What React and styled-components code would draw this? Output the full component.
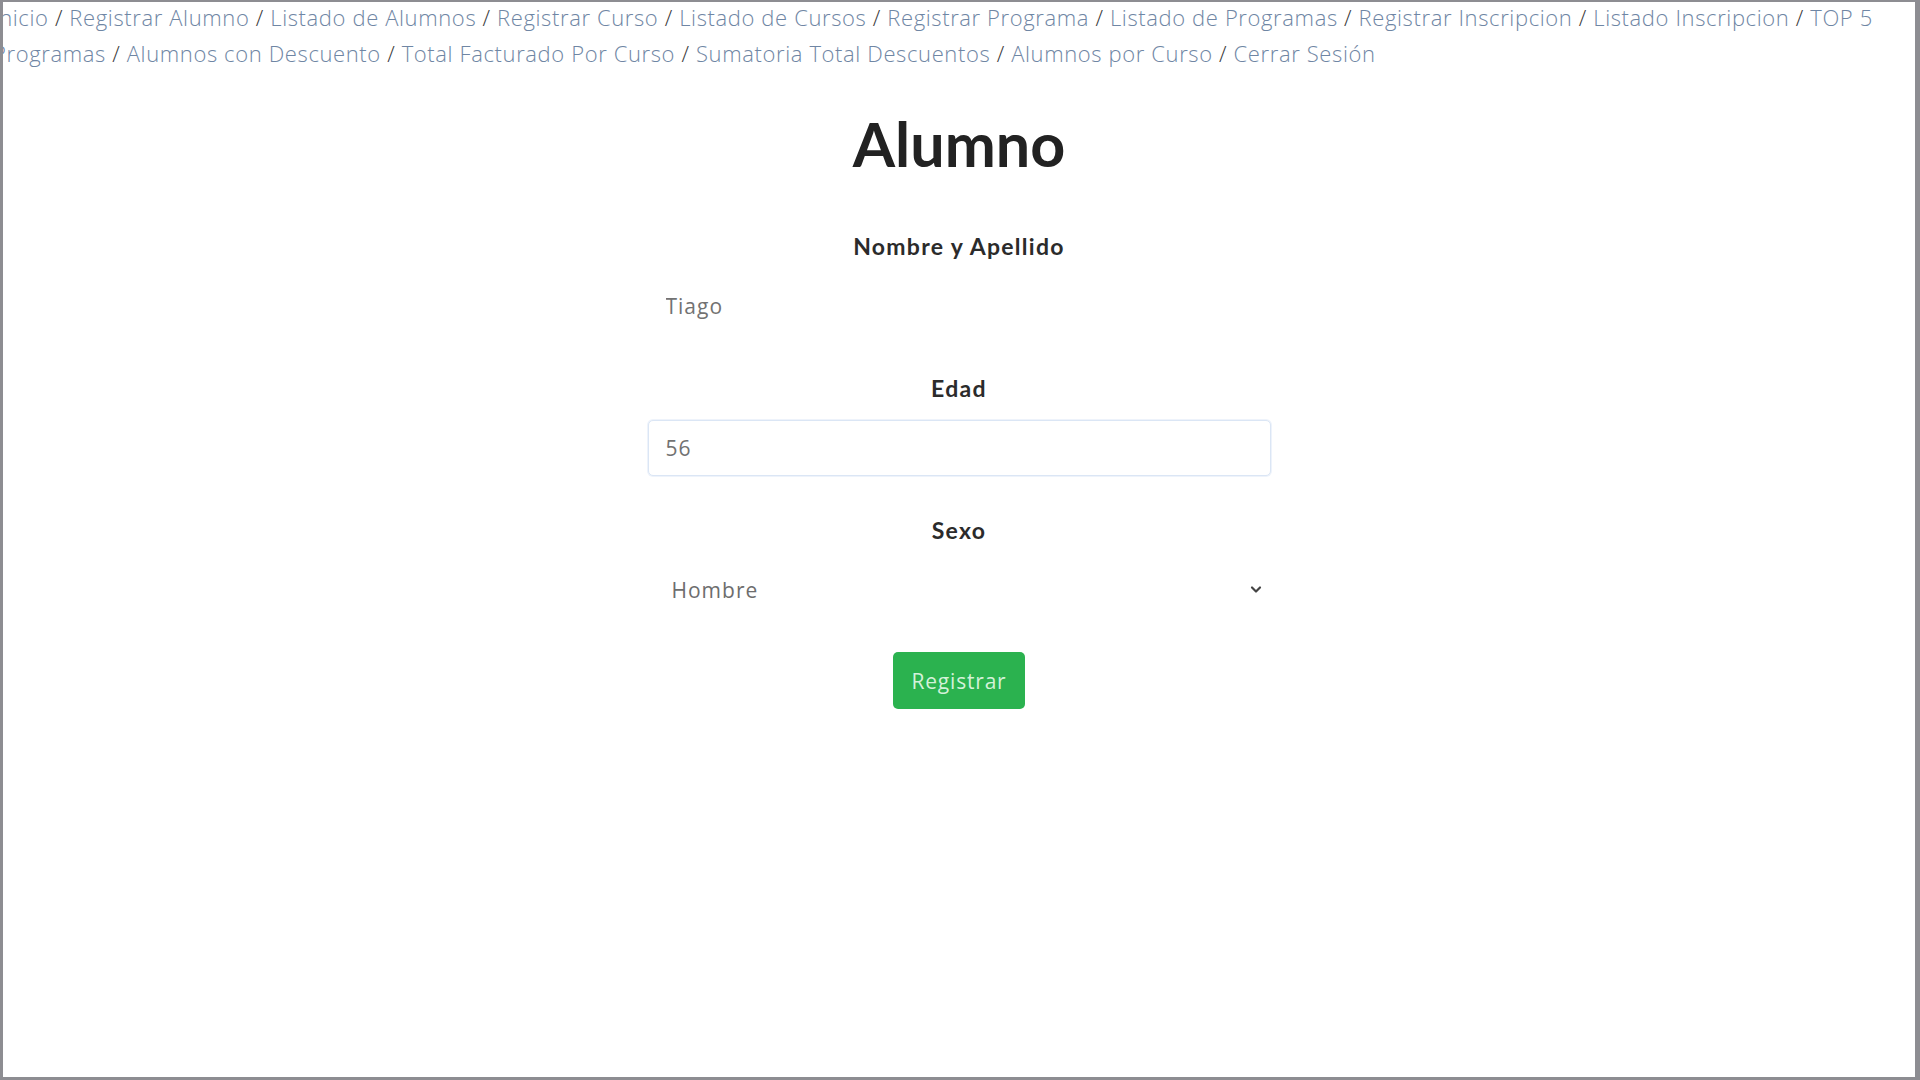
import React from 'react'
import styled, { createGlobalStyle } from 'styled-components'

const GlobalStyle = createGlobalStyle`
	html, body {
		margin: 0;
		padding: 0;
		background: #ffffff;
	}
	* {
		box-sizing: border-box;
	}
`

const Frame = styled.div`
	height: 100vh;
	overflow: hidden;
	background: #fff;
	border-style: solid;
	border-color: #8d8d92;
	border-width: 2px 5px 3px 3px;
`

const Nav = styled.nav`
	margin: -3px 0 0 -10px;
	font-family: "Open Sans", "Liberation Sans", sans-serif;
	font-weight: 300;
	font-size: 22px;
	letter-spacing: 0.62px;
	line-height: 36px;
	color: #3a3a3a;
`

const NavLink = styled.a`
	color: #6f86a4;
	text-decoration: none;
`

const Main = styled.main`
	display: flex;
	flex-direction: column;
	align-items: center;
	padding-top: 36px;
`

const Title = styled.h1`
	margin: 0 0 50px;
	font-family: Lato, "Open Sans", sans-serif;
	font-weight: 700;
	font-size: 61px;
	line-height: 74px;
	color: #222;
`

const Form = styled.form`
	width: 623px;
	display: flex;
	flex-direction: column;
	align-items: center;
`

const Field = styled.div`
	width: 100%;
	display: flex;
	flex-direction: column;
	align-items: center;
	gap: 17px;
	margin-bottom: ${p => p.$last ? '34px' : '39px'};
`

const Label = styled.label`
	font-family: Lato, "Open Sans", sans-serif;
	font-weight: 700;
	font-size: 23px;
	letter-spacing: 1.3px;
	line-height: 30px;
	color: #2b2b2b;
`

const Input = styled.input`
	width: 100%;
	height: 56px;
	padding: 0 17px;
	font-family: "Open Sans", "Liberation Sans", sans-serif;
	font-weight: 400;
	font-size: 21px;
	letter-spacing: 1px;
	color: #727272;
	background: #fff;
	border: 1px solid ${p => p.$focused ? '#dbe6f5' : 'transparent'};
	border-radius: 5px;
	outline: none;
	box-shadow: ${p => p.$focused ? '0 0 0 1px #eef3fb' : 'none'};
`

const SelectBox = styled.div`
	position: relative;
	width: 100%;
	height: 56px;
	display: flex;
	align-items: center;
	padding: 0 24px;
	font-family: "Open Sans", "Liberation Sans", sans-serif;
	font-size: 21px;
	letter-spacing: 1px;
	color: #6d6d6d;
`

const Chevron = styled.svg`
	position: absolute;
	right: 7px;
	top: 50%;
	margin-top: -9px;
`

const Button = styled.button`
	width: 132px;
	height: 57px;
	border: none;
	border-radius: 5px;
	background: #2bb24f;
	color: #d3f1d9;
	font-family: "Open Sans", "Liberation Sans", sans-serif;
	font-size: 21px;
	letter-spacing: 0.8px;
	cursor: pointer;
`

const links = [
	'Inicio', 'Registrar Alumno', 'Listado de Alumnos', 'Registrar Curso',
	'Listado de Cursos', 'Registrar Programa', 'Listado de Programas',
	'Registrar Inscripcion', 'Listado Inscripcion', 'TOP 5 Programas',
	'Alumnos con Descuento', 'Total Facturado Por Curso',
	'Sumatoria Total Descuentos', 'Alumnos por Curso', 'Cerrar Sesión',
]

export default function App() {
	return (
		<Frame>
			<GlobalStyle />
			<Nav>
				{links.map((l, i) => (
					<React.Fragment key={l}>
						<NavLink href="#">{l}</NavLink>
						{i < links.length - 1 && ' / '}
					</React.Fragment>
				))}
			</Nav>
			<Main>
				<Title>Alumno</Title>
				<Form onSubmit={e => e.preventDefault()}>
					<Field>
						<Label>Nombre y Apellido</Label>
						<Input defaultValue="Tiago" />
					</Field>
					<Field>
						<Label>Edad</Label>
						<Input $focused defaultValue="56" />
					</Field>
					<Field $last>
						<Label>Sexo</Label>
						<SelectBox>
							Hombre
							<Chevron width="16" height="16" viewBox="0 0 16 16">
								<path d="M4 6.5l4 4 4-4" fill="none" stroke="#444" strokeWidth="2.2" strokeLinecap="round" strokeLinejoin="round" />
							</Chevron>
						</SelectBox>
					</Field>
					<Button type="submit">Registrar</Button>
				</Form>
			</Main>
		</Frame>
	)
}
